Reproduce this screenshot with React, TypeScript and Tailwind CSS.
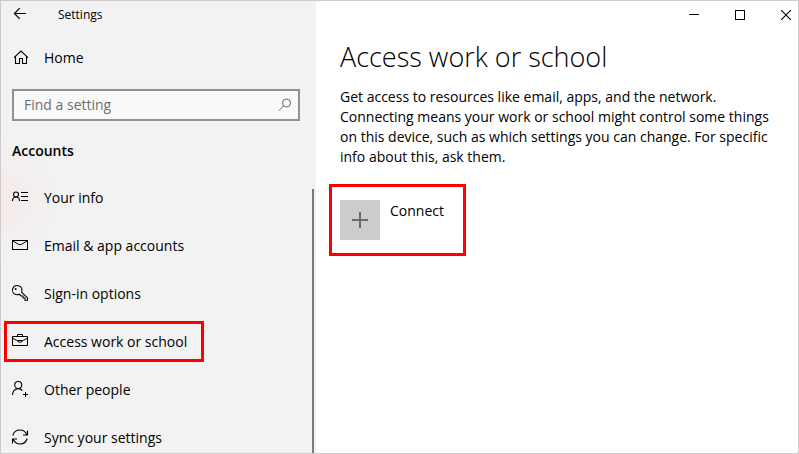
import type { ReactNode } from "react";

function Icon({ children, className = "size-4" }: { children: ReactNode; className?: string }) {
  return (
    <svg
      viewBox="0 0 16 16"
      className={`${className} shrink-0 overflow-visible`}
      fill="none"
      stroke="currentColor"
      strokeWidth="1"
      aria-hidden="true"
    >
      {children}
    </svg>
  );
}

const BackIcon = () => (
  <Icon>
    <path d="M1.5 6.5H13M6.7 1.2L1.4 6.5L6.7 11.8" strokeWidth="1.2" />
  </Icon>
);

const HomeIcon = () => (
  <Icon>
    <path d="M1 7.7L8 1L15 7.7M2.5 6.5V13.5H6.5V8.5H9.5V13.5H13.5V6.5" strokeWidth="1.1" />
  </Icon>
);

const SearchIcon = () => (
  <Icon>
    <circle cx="9.5" cy="6" r="4" />
    <path d="M6.6 8.9L1.8 13.7" />
  </Icon>
);

const InfoIcon = () => (
  <Icon>
    <circle cx="4" cy="5.5" r="2.5" strokeWidth="1.1" />
    <path d="M0.5 12C0.5 9.6 2 8 4 8S7.5 9.6 7.5 12" strokeWidth="1.1" />
    <path d="M9 3.5H16M9 7.5H16M9 11.5H16" />
  </Icon>
);

const MailIcon = () => (
  <Icon>
    <rect x="0.5" y="3.5" width="15" height="9" />
    <path d="M1 4L6.5 7.3Q8 8 9.5 7.3L15 4" />
  </Icon>
);

const KeyIcon = () => (
  <Icon>
    <path
      d="M9.6 7.2C10.7 4.6 9.5 1.8 7.2 0.9C4.6 -0.1 1.8 1 0.9 3.2C-0.1 5.7 1 8.4 3.2 9.3C4.5 9.9 6 9.8 7.3 9.2L9 11H11V13H13V15.3H15.5V12.9Z"
      strokeWidth="1.1"
    />
    <circle cx="3.7" cy="4" r="0.9" fill="currentColor" stroke="none" />
  </Icon>
);

const BriefcaseIcon = () => (
  <Icon>
    <path d="M0.5 3.5H15.5V12.5H0.5ZM5.5 3.5V1.5H10.5V3.5M1 5.5L6 8M15 5.5L10 8M6 7.5H10V8.5Q8 10.2 6 8.5Z" />
  </Icon>
);

const PersonAddIcon = () => (
  <Icon>
    <circle cx="6.2" cy="4" r="3.5" strokeWidth="1.1" />
    <path d="M0.5 14C0.5 10.3 2.9 7.6 6.2 7.6C7.8 7.6 9.4 8.4 10.4 9.7" strokeWidth="1.1" />
    <path d="M13.5 11V16M11 13.5H16" />
  </Icon>
);

const SyncIcon = () => (
  <Icon>
    <path
      d="M0.8 6.5C1.8 3 4.5 1 7.8 1C11 1 13.5 2.8 15 5.8M15.5 1.5V6H11M15.2 9.5C14.2 13 11.5 15 8.2 15C5 15 2.5 13.2 1 10.2M0.5 14.5V10H5"
      strokeWidth="1.1"
    />
  </Icon>
);

const navItems = [
  { label: "Your info", icon: <InfoIcon /> },
  { label: "Email & app accounts", icon: <MailIcon /> },
  { label: "Sign-in options", icon: <KeyIcon /> },
  { label: "Access work or school", icon: <BriefcaseIcon />, highlighted: true },
  { label: "Other people", icon: <PersonAddIcon /> },
  { label: "Sync your settings", icon: <SyncIcon /> },
];

function Sidebar() {
  return (
    <aside className="flex w-[315px] shrink-0 flex-col bg-[#f2f2f2] bg-[radial-gradient(circle_at_0px_200px,#f6e9e9_0px,#f2f2f2_60px)]">
      <div className="flex h-7 items-center gap-[29px] pl-3">
        <button type="button" aria-label="Back">
          <BackIcon />
        </button>
        <span className="text-xs">Settings</span>
      </div>
      <button type="button" className="mt-[5px] flex h-12 items-center gap-[15px] pl-3 text-left">
        <HomeIcon />
        Home
      </button>
      <div className="mt-[7px] mr-4 ml-[11px] flex h-8 items-center border-2 border-[#919191] bg-[#f9f9f9] pr-[5px] pl-[10px] text-[#666]">
        <input
          type="text"
          aria-label="Find a setting"
          placeholder="Find a setting"
          className="min-w-0 flex-1 bg-transparent outline-none placeholder:text-[#6e6e6e]"
        />
        <SearchIcon />
      </div>
      <h2 className="mt-5 pl-[11px] leading-5 font-semibold">Accounts</h2>
      <div className="relative mt-3 min-h-0 flex-1 overflow-hidden">
        <nav>
          <ul>
            {navItems.map((item) => (
              <li key={item.label} className="relative">
                <button type="button" className="flex h-12 w-full items-center gap-4 pl-[11px] text-left">
                  {item.icon}
                  <span className="pt-[2px]">{item.label}</span>
                </button>
                {item.highlighted && (
                  <span className="pointer-events-none absolute top-1 left-[3px] h-[41px] w-[200px] border-3 border-[#f00]" />
                )}
              </li>
            ))}
          </ul>
        </nav>
        <div className="absolute top-4 right-[2px] bottom-0 w-[2px] bg-[#7a7a7a]" />
      </div>
    </aside>
  );
}

function WindowControls() {
  return (
    <div className="flex h-7 justify-end">
      <button type="button" aria-label="Minimize" className="flex w-[46px] items-center justify-center">
        <svg viewBox="0 0 10 10" className="size-[10px]" stroke="currentColor" fill="none" aria-hidden="true">
          <path d="M0 4.5H10" />
        </svg>
      </button>
      <button type="button" aria-label="Maximize" className="flex w-[46px] items-center justify-center">
        <svg viewBox="0 0 10 10" className="size-[10px]" stroke="currentColor" fill="none" aria-hidden="true">
          <rect x="0.5" y="0.5" width="9" height="9" />
        </svg>
      </button>
      <button type="button" aria-label="Close" className="flex w-[35px] items-center justify-end pr-[7px]">
        <svg viewBox="0 0 10 10" className="size-[10px]" stroke="currentColor" fill="none" aria-hidden="true">
          <path d="M0 0L10 10M10 0L0 10" strokeWidth="1.1" />
        </svg>
      </button>
    </div>
  );
}

export default function App() {
  return (
    <div className="flex h-screen overflow-hidden border border-[#ccc] bg-white font-['Open_Sans','Noto_Sans',sans-serif] text-sm text-black">
      <Sidebar />
      <main className="min-w-0 flex-1">
        <WindowControls />
        <div className="pl-6">
          <h1 className="mt-2 text-[27px] leading-10 font-light">Access work or school</h1>
          <p className="mt-[10px] max-w-[440px] leading-5">
            Get access to resources like email, apps, and the network. Connecting means your work or school might
            control some things on this device, such as which settings you can change. For specific info about this,
            ask them.
          </p>
        </div>
        <button
          type="button"
          className="mt-[17px] ml-[13px] flex h-[72px] w-[137px] items-start gap-[10px] border-3 border-[#f00] pt-[13px] pl-2"
        >
          <span className="flex size-10 items-center justify-center bg-[#ccc] text-[#6b6b6b]">
            <svg viewBox="0 0 16 16" className="size-4" stroke="currentColor" strokeWidth="2" aria-hidden="true">
              <path d="M0 8H16M8 0V16" />
            </svg>
          </span>
          <span className="pt-px leading-5">Connect</span>
        </button>
      </main>
    </div>
  );
}
